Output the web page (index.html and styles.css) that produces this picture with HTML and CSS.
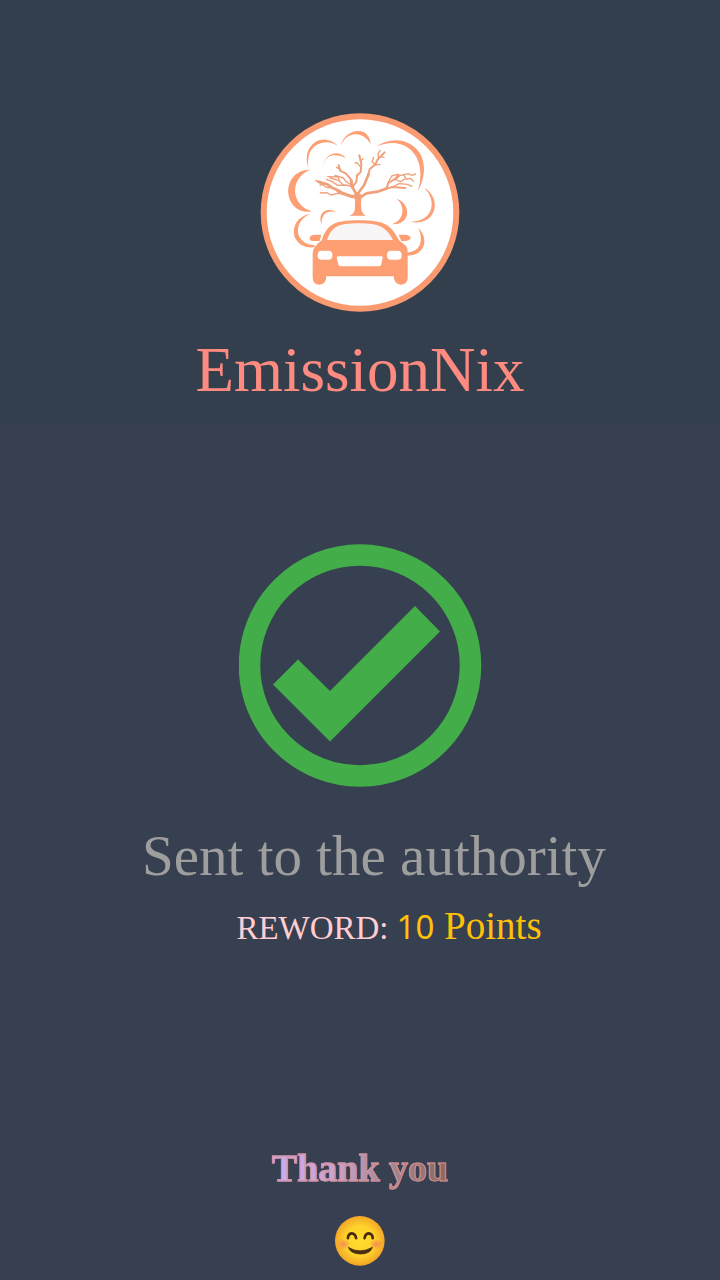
FILE: index.html
```html
<!DOCTYPE html>
<html lang="en">
<head>
<meta charset="utf-8">
<meta name="viewport" content="width=device-width, initial-scale=1">
<title>EmissionNix</title>
<link rel="stylesheet" href="styles.css">
</head>
<body class="screen">
<header class="brand">
  <svg class="brand-logo" viewBox="30 24 600 597" role="img" aria-label="EmissionNix logo">
    <circle class="paper" cx="330" cy="322.500" r="289" stroke-width="18"/>
    <!-- smoke puffs -->
    <g class="ink">
      <path d="M176 189C158 142 187 101 228 104Q248 106 265 124Q242 108 218 113C181 120 170 153 176 189Z"/>
      <path d="M272 121C283 87 315 70 342 82Q359 91 362 118Q348 91 321 88C298 86 284 99 272 121Z"/>
      <path d="M379 124C426 93 483 101 511 147Q536 196 504 258Q520 202 502 161C475 110 426 105 379 124Z"/>
      <path d="M219 185C223 147 264 130 288 160Q270 148 248 151C230 155 223 168 219 185Z"/>
      <path d="M182 194C133 193 109 233 116 272C124 310 155 325 186 319Q150 309 139 278C127 239 148 206 182 194Z"/>
      <path d="M523 248C557 268 564 309 541 336Q518 358 480 350C516 350 539 334 544 308Q550 276 523 248Z"/>
      <path d="M440 281C469 291 478 321 467 340Q455 359 426 358Q454 347 457 323Q459 297 440 281Z"/>
      <path d="M215 359C201 325 229 304 258 321Q234 316 223 328Q214 340 215 359Z"/>
      <path d="M180 326C137 335 123 374 137 402Q154 431 193 427V420Q161 420 147 394C137 365 151 340 180 326Z"/>
      <path d="M505 369C529 391 529 426 507 442Q493 453 471 451V443Q500 441 509 421Q518 398 505 369Z"/>
    </g>
    <!-- tree -->
    <g class="branch">
      <path class="ink" stroke="none" d="M312 268L322 261L336 270Q330 297 335 318Q339 329 348 332H298Q312 328 314 316Q318 291 312 268Z"/>
      <path stroke-width="10" d="M321 275Q305 276 292 270Q277 266 264 258"/>
      <path stroke-width="8" d="M268 258L250 250L232 238L205 230M319 267L307 246L304 226M323 267L343 239L356 207M326 281L349 265L382 260L408 251"/>
      <path stroke-width="6" d="M306 248L301 221L288 206L270 197L266 181M306 248L319 231L321 211L332 201L334 178L328 151M354 211L359 193L376 178L383 163L404 142M382 260L426 246L466 249M410 249L415 234L435 222L446 209"/>
      <path stroke-width="4" d="M288 265L260 266L243 270L230 263L211 264M251 250L227 246L212 235L197 226M229 237L210 240M304 244L287 240L263 241L247 230L229 223M279 239L267 227L240 219M268 228L265 216L233 215M302 239L286 227L280 219L255 211M330 184L321 173L315 174M332 168L339 161M376 178L366 170L371 157M386 162L384 147L390 136M391 155L402 157M438 222L451 211L475 206L486 211L497 207M461 209L469 223L481 220L490 228M432 222L452 230L464 222M428 246L447 236L472 238L486 244M412 238L425 213L443 208M272 193L259 187M374 181L390 178"/>
    </g>
    <!-- car -->
    <g>
      <path class="ink" d="M215 406C232 358 251 346 327 346C402 346 423 358 447 406L468 422Q474 430 473 447V519Q472 539 452 539Q433 539 431 514H229Q229 539 208 539Q189 538 188 518V447Q187 426 215 406Z"/>
      <path class="glass" d="M231 405C245 366 262 355 327 355C389 355 407 366 429 405Z"/>
      <path class="ink" d="M179 398Q180 389 199 389H214L209 408H188Q178 407 179 398ZM446 389H463Q481 390 482 399Q480 408 463 408H454Z"/>
      <rect class="white" x="203" y="437" width="44" height="27" rx="12"/>
      <rect class="white" x="411" y="437" width="44" height="27" rx="12"/>
      <path class="white" d="M264 454H395Q399 454 398 460L393 481Q392 484 386 484H271Q265 484 265 478L260 459Q260 454 264 454Z"/>
    </g>
  </svg>
  <h1 class="brand-name">EmissionNix</h1>
</header>
<main class="result">
  <svg class="result-check" viewBox="0 0 243 243" role="img" aria-label="Success">
    <circle cx="121" cy="121.500" r="110.500" fill="none" stroke="#42ad49" stroke-width="21.500"/>
    <path fill="#42ad49" d="M34 140.500L59 115.500L91 147L176 62L201 87.500L91 197.500Z"/>
  </svg>
  <p class="result-title">Sent to the authority</p>
  <p class="reward"><span class="reward-label">REWORD:</span><span class="reward-value"><span class="reward-number">10</span> Points</span></p>
</main>
<footer class="closing">
  <p class="thanks">Thank you</p>
  <svg class="smile" viewBox="0 0 150 150" role="img" aria-label="Smiling face">
    <defs>
      <radialGradient id="face"><stop offset="0" stop-color="#ffdc2c"/><stop offset=".6" stop-color="#fed22b"/><stop offset="1" stop-color="#f3a528"/></radialGradient>
      <radialGradient id="cheek"><stop offset="0" stop-color="#f58b55"/><stop offset="1" stop-color="#f58b55" stop-opacity="0"/></radialGradient>
    </defs>
    <circle cx="73" cy="73" r="73" fill="url(#face)"/>
    <ellipse cx="25" cy="83" rx="20" ry="16" fill="url(#cheek)"/>
    <ellipse cx="121" cy="83" rx="20" ry="16" fill="url(#cheek)"/>
    <path d="M38 65Q39 52 49 51Q60 52 62 65M87 65Q89 52 99 51Q110 52 111 65" fill="none" stroke="#4a2c13" stroke-width="8" stroke-linecap="round"/>
    <path d="M39 92Q73 113 110 92Q105 112 74 112Q45 111 39 92Z" fill="#4a2c13" stroke="#4a2c13" stroke-width="2" stroke-linejoin="round"/>
  </svg>
</footer>
</body>
</html>
```
FILE: styles.css
```css
* { box-sizing: border-box; }

.screen {
  margin: 0;
  min-height: 100vh;
  display: flex;
  flex-direction: column;
  background: #374050;
  font-family: "Liberation Serif", "Times New Roman", serif;
}

.brand,
.result,
.closing {
  display: flex;
  flex-direction: column;
  align-items: center;
}

.brand {
  padding: 113px 0 18px;
  background: #343f4e;
}

.brand-logo { width: 200px; height: 199px; }

.paper { fill: #fff; stroke: #fa9a70; }
.ink { fill: #fd9e73; }
.white { fill: #fff; }
.glass { fill: #f7f5f5; }
.branch { fill: none; stroke: #f0a17b; stroke-linecap: round; stroke-linejoin: round; }

.brand-name {
  margin: 22px 0 0;
  font-size: 63px;
  line-height: 72px;
  font-weight: 400;
  color: #ff8a80;
}

.result { padding-top: 120px; }

.result-check { width: 243px; height: 243px; }

.result-title {
  margin: 37px 0 0;
  padding-left: 28px;
  font-size: 57px;
  line-height: 64px;
  color: #9e9e9e;
}

.reward {
  display: flex;
  align-items: baseline;
  gap: 8px;
  margin: 14px 0 0;
  padding-left: 58px;
  line-height: 48px;
}

.reward-label { font-size: 33px; color: #ffcdd2; }
.reward-value { font-size: 39px; color: #ffc107; }
.reward-number { font-family: "Noto Sans", sans-serif; font-size: 33px; line-height: 1; }

.closing {
  gap: 26px;
  margin-top: auto;
  padding: 32px 0 13px;
}

.thanks {
  margin: 0;
  font-size: 38px;
  line-height: 44px;
  font-weight: 700;
  color: transparent;
  background: linear-gradient(90deg, #c5aef5, #c9a3d2 35%, #a28b92 65%, #8a6955);
  -webkit-background-clip: text;
  background-clip: text;
  -webkit-text-stroke: 1px #d68e96;
}

.smile { width: 51px; height: 51px; }
```
